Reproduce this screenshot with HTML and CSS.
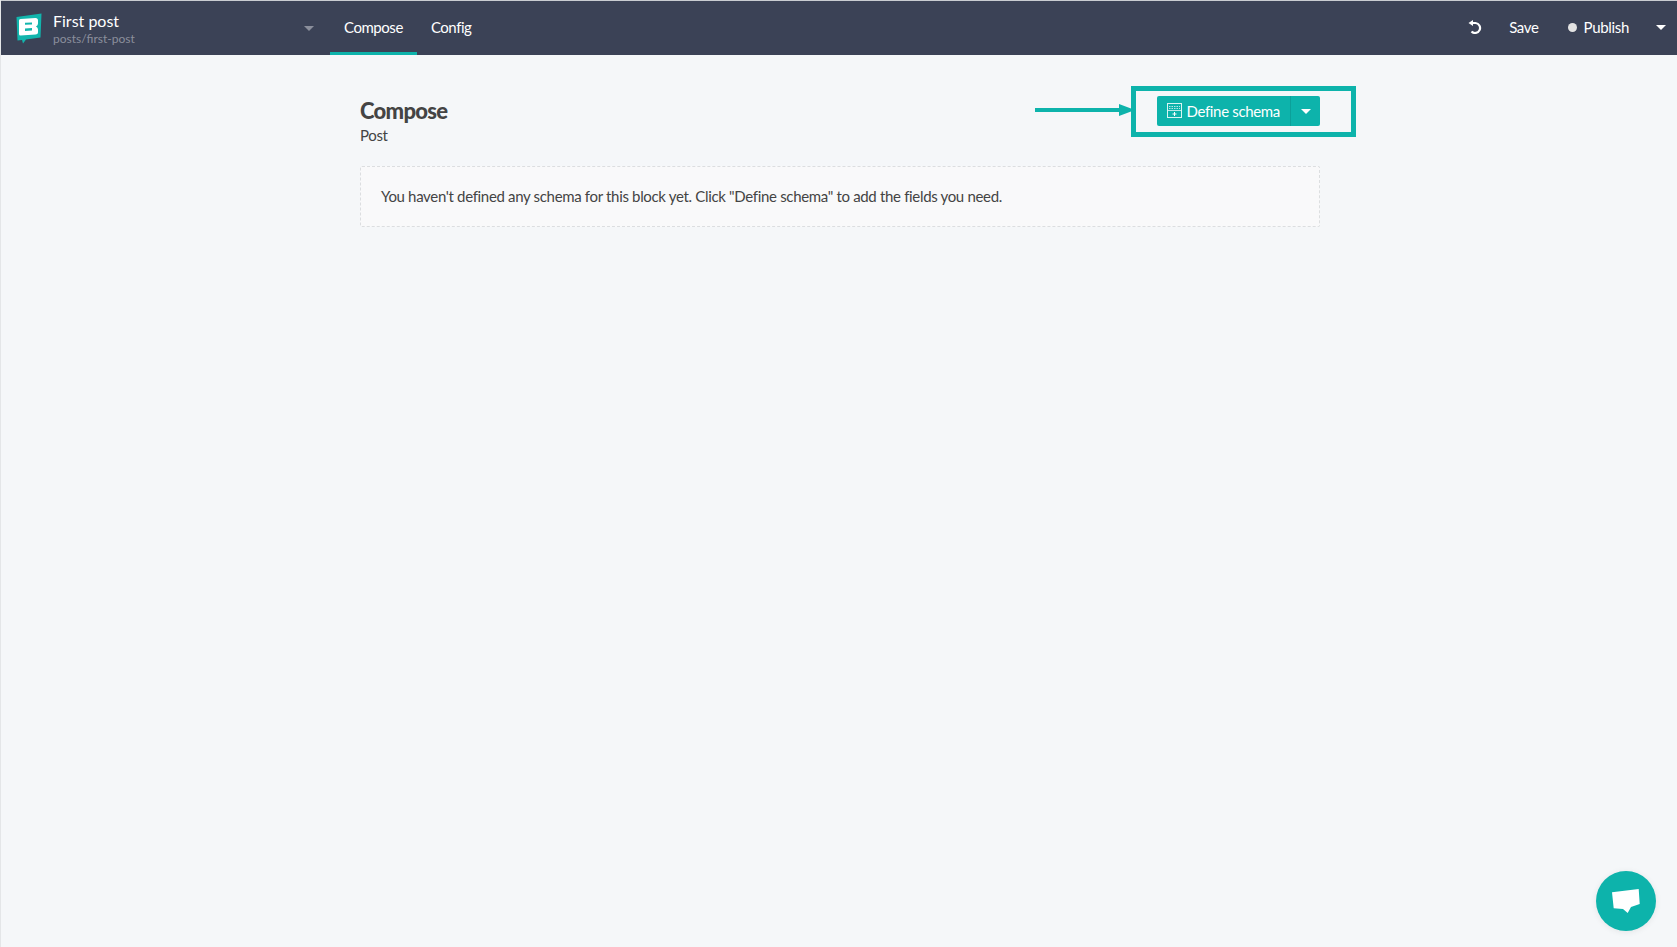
FILE: index.html
```html
<!DOCTYPE html>
<html>
<head>
<title>Compose</title>
<meta charset="UTF-8">
<link rel="stylesheet" href="styles.css">
</head>
<body>
	<div class="topbar">
		<div class="brand">
			<svg class="brand-logo" width="26" height="31" viewBox="0 0 26 31">
				<path fill="#12b5ad" d="M0.5 4 L25.5 0.5 L24.5 24.5 L10 26.5 L7 30.5 L6 27 L1.5 27.5 Z"/>
				<path fill="#fff" fill-rule="evenodd" d="M3 7.5 Q3 6 4.5 6 L19.5 5 Q22 5 22 7.5 L22 10.5 Q22 12.5 20 13.5 Q22 14.5 22 16.5 L22 19.5 Q22 21.5 19.5 21.5 L4.5 22.5 Q3 22.5 3 21 Z M9 9.8 L9 11.8 L16 11.4 L16 9.4 Z M9 15.5 L9 18 L16 17.6 L16 15.1 Z"/>
			</svg>
			<div class="brand-text">
				<div class="brand-title">First post</div>
				<div class="brand-path">posts/first-post</div>
			</div>
			<span class="caret caret-dim"></span>
		</div>
		<div class="tabs">
			<a class="tab tab-active">Compose</a>
			<a class="tab">Config</a>
		</div>
		<div class="actions">
			<svg class="undo" width="14" height="14" viewBox="0 0 14 14">
				<path fill="none" stroke="#fff" stroke-width="2.2" d="M4 3 H7.5 A5 5 0 1 1 3.5 11.5"/>
				<path fill="#fff" d="M5 0 L5 6 L0.5 3 Z"/>
			</svg>
			<span class="action action-save">Save</span>
			<span class="dot"></span>
			<span class="action">Publish</span>
			<span class="caret"></span>
		</div>
	</div>

	<div class="main">
		<div class="page-head">
			<div>
				<h1>Compose</h1>
				<div class="page-sub">Post</div>
			</div>
			<div class="btn-group">
				<a class="btn">
					<svg width="15" height="15" viewBox="0 0 15 15">
						<rect x="0.5" y="0.5" width="14" height="14" fill="none" stroke="#fff" stroke-opacity="0.85"/>
						<path stroke="#fff" stroke-opacity="0.7" fill="none" stroke-dasharray="1.5 1" d="M2 3.5 H13 M2 5.5 H13"/>
						<path stroke="#fff" stroke-opacity="0.7" fill="none" d="M1 7.5 H14"/>
						<path stroke="#fff" fill="none" d="M7.5 9 V13 M5.5 11 H9.5"/>
					</svg>
					Define schema
				</a>
				<a class="btn-more"><span class="caret"></span></a>
			</div>
		</div>
		<div class="empty-note">You haven't defined any schema for this block yet. Click "Define schema" to add the fields you need.</div>
	</div>

	<!-- annotation drawn over the screenshot -->
	<div class="callout-box"></div>
	<svg class="callout-arrow" width="100" height="14" viewBox="0 0 100 14">
		<path fill="#0db3ab" d="M0 5 H84 V1 L100 7 L84 13 V9 H0 Z"/>
	</svg>

	<div class="chat-bubble">
		<svg width="28" height="24" viewBox="0 0 28 24">
			<path fill="#fff" d="M0 3.3 L26.7 0 L27.7 15 L19 18 L15.7 24 L11 20 L1.7 19.3 Z"/>
		</svg>
	</div>
</body>
</html>
```

FILE: styles.css
```css
html, body {
	height: 100%;
}

body {
	margin: 0;
	background-color: #f5f7f9;
	font-family: "Lato", "Noto Sans", sans-serif;
	font-size: 15px;
	letter-spacing: -0.33px;
	color: #444;
	border-left: 1px solid #e4e6e8;
	box-sizing: border-box;
	overflow: hidden;
}

.topbar {
	display: flex;
	align-items: center;
	height: 55px;
	margin-left: -1px;
	box-sizing: border-box;
	border-top: 1px solid #c9ccd1;
	background-color: #3b4256;
	color: #fff;
}

.brand {
	display: flex;
	align-items: center;
	width: 330px;
	padding-left: 16px;
	box-sizing: border-box;
}

.brand-logo {
	margin-right: 11px;
}

.brand-text {
	flex: 1;
}

.brand-title {
	font-size: 16px;
	line-height: 20px;
	letter-spacing: 0;
}

.brand-path {
	font-size: 12px;
	line-height: 15px;
	letter-spacing: 0;
	color: #8b8f9c;
}

.caret {
	display: inline-block;
	width: 0;
	height: 0;
	border-left: 5px solid transparent;
	border-right: 5px solid transparent;
	border-top: 5px solid #fff;
}

.caret-dim {
	border-top-color: #8b8f9c;
	margin-right: 16px;
}

.tabs {
	display: flex;
	height: 100%;
	letter-spacing: -0.45px;
}

.tab {
	display: flex;
	align-items: center;
	padding: 0 14px;
	box-sizing: border-box;
	border-bottom: 3px solid transparent;
}

.tab-active {
	border-bottom-color: #0db3ab;
}

.actions {
	display: flex;
	align-items: center;
	margin-left: auto;
	padding: 0 11px 2px 0;
}

.undo {
	margin-right: 27px;
}

.action-save {
	margin-right: 29px;
}

.dot {
	width: 9px;
	height: 9px;
	border-radius: 50%;
	background-color: #e3e3e3;
	margin-right: 7px;
}

.actions .caret {
	margin-left: 27px;
}

.main {
	width: 960px;
	margin-left: 359px;
}

.page-head {
	display: flex;
	justify-content: space-between;
	align-items: flex-start;
	padding-top: 41px;
	margin-bottom: 20px;
}

h1 {
	margin: 0;
	font-size: 22px;
	line-height: 30px;
	font-weight: 900;
	letter-spacing: -0.7px;
}

.page-sub {
	line-height: 20px;
	margin-top: -1px;
	margin-bottom: 1px;
}

.btn-group {
	display: flex;
	height: 30px;
	color: #fff;
	background-color: #0db3ab;
	border-radius: 2px;
}

.btn {
	display: flex;
	align-items: center;
	gap: 4px;
	padding: 0 10px 1px 10px;
	border-right: 1px solid #0ca099;
}

.btn-more {
	display: flex;
	align-items: center;
	padding: 0 9px 0 10px;
}

.empty-note {
	padding: 19px 20px 20px;
	line-height: 20px;
	border: 1px dashed #dcdee0;
	border-radius: 2px;
	background-color: #f9f9fa;
}

.callout-box {
	position: absolute;
	left: 1131px;
	top: 86px;
	width: 225px;
	height: 51px;
	box-sizing: border-box;
	border: 5px solid #0db3ab;
}

.callout-arrow {
	position: absolute;
	left: 1035px;
	top: 103px;
}

.chat-bubble {
	position: absolute;
	right: 21px;
	bottom: 16px;
	width: 60px;
	height: 60px;
	border-radius: 50%;
	background-color: #0db3ab;
	display: flex;
	align-items: center;
	justify-content: center;
	box-shadow: 0 1px 6px rgba(0, 0, 0, 0.08);
}
```
